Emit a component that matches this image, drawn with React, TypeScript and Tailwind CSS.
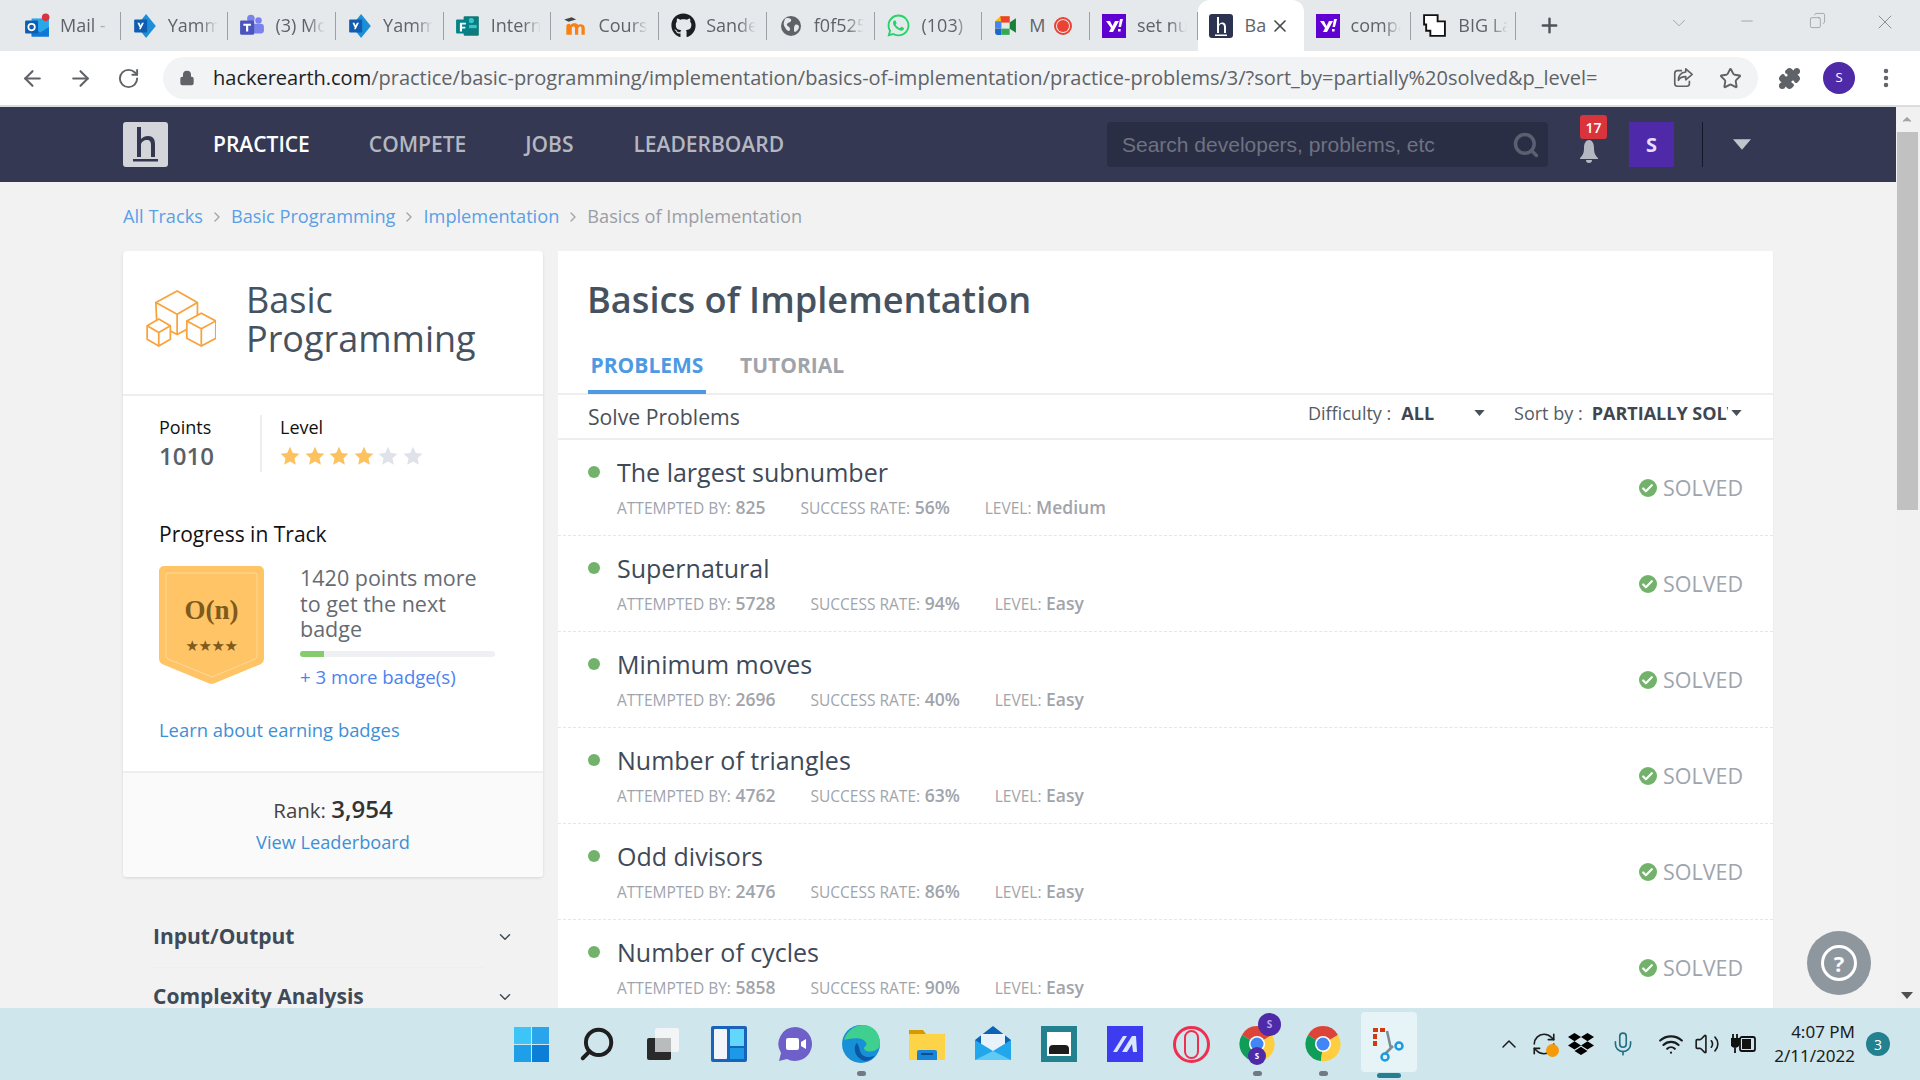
import React from 'react';
import { ArrowLeft, ArrowRight, ChevronDown, ChevronRight, ChevronUp, Copy, Lock, Minus, MoreVertical, Plus, Puzzle, RotateCw, Search, Star, Volume2, Wifi, X, Mic, RefreshCw, Check } from 'lucide-react';
import { FaDropbox, FaGithub, FaWhatsapp } from 'react-icons/fa';

const HLogo = ({ className }: { className: string }) => (
  <svg viewBox="0 0 45 45" className={className}>
    <rect width="45" height="45" rx="3" fill="currentColor" />
    <path d="M14 5h4v12c2-2 4-3 7-3 5 0 7 3 7 8v13h-4V23c0-3-1-5-4-5s-6 2-6 5v12h-4zM10 37h25v2.500H10z" fill="#33374f" />
  </svg>
);

const YahooIcon = () => (
  <svg viewBox="0 0 24 24" className="w-[24px] h-[24px]">
    <rect width="24" height="24" fill="#5f01d1" />
    <path d="M4 7h4l2.500 5L13 7h4l-6 11H7l2-4zM18 5h3l-2 8h-2.500zM16 15h2.600v2.600H16z" fill="#fff" />
  </svg>
);

const YammerIcon = () => (
  <svg viewBox="0 0 24 24" className="w-[26px] h-[26px]">
    <path d="M13 1l9 11-9 11-4-5V6z" fill="#1d8fd8" />
    <rect x="2" y="6" width="12" height="12" rx="1" fill="#0f5cb0" />
    <path d="M5 9h1.800L8 11.500 9.200 9H11l-3 6H6.500l.7-1.500z" fill="#fff" />
  </svg>
);

const tabs: { label: string; icon: React.ReactNode }[] = [
  {
    label: 'Mail -',
    icon: (
      <svg viewBox="0 0 24 24" className="w-[26px] h-[26px]">
        <rect x="7" y="5" width="16" height="16" fill="#28a8ea" />
        <path d="M7 13l8 5 8-5v9H7z" fill="#0f78d4" />
        <rect x="1" y="7" width="12" height="12" rx="1" fill="#0f5cb0" />
        <circle cx="7" cy="13" r="3" fill="none" stroke="#fff" strokeWidth="1.600" />
        <circle cx="20" cy="4" r="3.500" fill="#d9333f" />
      </svg>
    ),
  },
  { label: 'Yammer', icon: <YammerIcon /> },
  {
    label: '(3) Mo',
    icon: (
      <svg viewBox="0 0 24 24" className="w-[26px] h-[26px]">
        <circle cx="18" cy="7" r="3" fill="#7b83eb" />
        <circle cx="11" cy="5" r="3.500" fill="#7b83eb" />
        <rect x="11" y="10" width="12" height="9" rx="3" fill="#7b83eb" />
        <rect x="1" y="7" width="13" height="13" rx="1" fill="#4b53bc" />
        <path d="M4 10h7v1.800H8.500V17h-2v-5.200H4z" fill="#fff" />
      </svg>
    ),
  },
  { label: 'Yammer', icon: <YammerIcon /> },
  {
    label: 'Interns',
    icon: (
      <svg viewBox="0 0 24 24" className="w-[26px] h-[26px]">
        <rect x="8" y="3" width="14" height="18" rx="1" fill="#0f7b7b" />
        <circle cx="15" cy="7" r="2.500" fill="#37c6d0" />
        <rect x="11" y="11" width="9" height="3" fill="#37c6d0" />
        <rect x="1" y="6" width="12" height="13" rx="1" fill="#038387" />
        <path d="M4.500 9H10v1.600H6.500v2h3v1.600h-3V17h-2z" fill="#fff" />
      </svg>
    ),
  },
  {
    label: 'Course',
    icon: (
      <svg viewBox="0 0 24 24" className="w-[26px] h-[26px]">
        <path d="M2 6l7-2 4 2-7 2z" fill="#444" />
        <path d="M4 20V12c0-2 3-3 4-1 1-2 6-2 7 0 1-1 6-1 6 3v6h-3v-6c0-2-2-2-3 0v6h-3v-6c0-2-3-2-3 0v6z" fill="#f98012" />
      </svg>
    ),
  },
  { label: 'Sande', icon: <FaGithub className="w-[25px] h-[25px] text-[#1b1f23]" /> },
  {
    label: 'f0f525',
    icon: (
      <svg viewBox="0 0 24 24" className="w-[24px] h-[24px]">
        <circle cx="12" cy="12" r="10" fill="#5f6368" />
        <path d="M8 4c3 0 5 1 4 3s-3 1-4 3 3 2 3 5-3 2-4 0-3-4-2-7 1-4 3-4zM16 11c2-1 4 0 4 2s-3 5-4 5-1-2-1-3 0-3 1-4z" fill="#e6e9ec" />
      </svg>
    ),
  },
  { label: '(103)', icon: <FaWhatsapp className="w-[25px] h-[25px] text-[#25d366]" /> },
];

const tabsRight: { label: string; icon: React.ReactNode }[] = [
  {
    label: 'M',
    icon: (
      <svg viewBox="0 0 24 24" className="w-[25px] h-[25px]">
        <path d="M2 8l5-5h9v6H8v6H2z" fill="#fbbc04" />
        <path d="M2 15h6v6H4a2 2 0 0 1-2-2z" fill="#1967d2" />
        <path d="M8 15h8v6H8z" fill="#34a853" />
        <path d="M16 9l6-4v14l-6-4z" fill="#188038" />
        <path d="M2 8h6v7H2z" fill="#4285f4" />
        <path d="M7 3h9v6H8z" fill="#ea4335" />
      </svg>
    ),
  },
  { label: 'set nu', icon: <YahooIcon /> },
];

const problems = [
  { name: 'The largest subnumber', attempted: '825', rate: '56%', level: 'Medium' },
  { name: 'Supernatural', attempted: '5728', rate: '94%', level: 'Easy' },
  { name: 'Minimum moves', attempted: '2696', rate: '40%', level: 'Easy' },
  { name: 'Number of triangles', attempted: '4762', rate: '63%', level: 'Easy' },
  { name: 'Odd divisors', attempted: '2476', rate: '86%', level: 'Easy' },
  { name: 'Number of cycles', attempted: '5858', rate: '90%', level: 'Easy' },
];

function Tab({ label, icon }: { label: string; icon: React.ReactNode }) {
  return (
    <div className="w-[107.700px] h-[28px] flex items-center border-r border-[#9aa0a6] shrink-0">
      <div className="w-[47px] flex justify-center pl-[1px] shrink-0">{icon}</div>
      <span className="w-[50px] overflow-hidden whitespace-nowrap text-[18px] text-[#5f6368] [mask-image:linear-gradient(to_right,black_65%,transparent)]">
        {label}
      </span>
    </div>
  );
}

function Caret({ className }: { className: string }) {
  return (
    <svg viewBox="0 0 12 7" className={className}>
      <path d="M0 0h12L6 7z" fill="currentColor" />
    </svg>
  );
}

function Rating({ filled }: { filled: boolean }) {
  return (
    <svg viewBox="0 0 24 24" className={`w-[20px] h-[20px] ${filled ? 'text-[#fdc15e]' : 'text-[#dfe2e9]'}`}>
      <path d="M12 1l3.400 7.300 7.900.9-5.900 5.400 1.600 7.900L12 18.500l-7 4 1.600-7.900L.7 9.200l7.900-.9z" fill="currentColor" />
    </svg>
  );
}

function Blocks() {
  return (
    <svg viewBox="0 0 72 60" className="w-[70px] h-[58px] -mt-[8px] text-[#f9a23b]" fill="none" stroke="currentColor" strokeWidth="1.800" strokeLinejoin="round">
      <path d="M10 13L32 1l21 12v22l-21 11-21-11z" />
      <path d="M10 13l22 12 21-12M32 25v21" />
      <g fill="#fff">
        <path d="M1 37l12-7 12 7v14l-12 7-12-7z" />
        <path d="M42 32l15-8 15 8v18l-15 8-15-8z" />
      </g>
      <path d="M1 37l12 7 12-7M13 44v14M42 32l15 8 15-8M57 40v18" />
    </svg>
  );
}

function Badge() {
  return (
    <div className="relative w-[105px] h-[118px]">
      <svg viewBox="0 0 105 118" className="absolute inset-0 w-full h-full">
        <path d="M5 0h95a5 5 0 0 1 5 5v88a6 6 0 0 1-3 5l-46 19a8 8 0 0 1-7 0L3 98a6 6 0 0 1-3-5V5a5 5 0 0 1 5-5z" fill="#fec465" />
        <path d="M9 7h87a2 2 0 0 1 2 2v81a4 4 0 0 1-2 3l-43 18-44-18a4 4 0 0 1-2-3V9a2 2 0 0 1 2-2z" fill="none" stroke="#ffd99a" strokeWidth="1" />
      </svg>
      <div className="relative flex flex-col items-center pt-[29px] text-[#80591c]">
        <span className="font-['Liberation_Serif',serif] font-bold text-[27px] leading-[30px]">O(n)</span>
        <span className="text-[15px] leading-[16px] mt-[13px] tracking-[-0.500px] font-['DejaVu_Sans',sans-serif]">★★★★</span>
      </div>
    </div>
  );
}

function ProblemRow({ name, attempted, rate, level }: (typeof problems)[number]) {
  return (
    <div className="h-[96px] shrink-0 flex justify-between items-start pl-[30px] pr-[30px] pt-[17px] border-b border-dashed border-[#e6e6e6]">
      <div>
        <div className="flex items-center gap-[17px]">
          <span className="w-[12px] h-[12px] rounded-full bg-[#72b26a]" />
          <span className="text-[25px] leading-[30px] font-medium text-[#3f4a58]">{name}</span>
        </div>
        <div className="flex gap-[35px] ml-[29px] mt-[9px] text-[#a0a4ab] font-semibold text-[17.500px] leading-[22px]">
          <span><span className="text-[15.500px] font-normal">ATTEMPTED BY:</span> {attempted}</span>
          <span><span className="text-[15.500px] font-normal">SUCCESS RATE:</span> {rate}</span>
          <span><span className="text-[15.500px] font-normal">LEVEL:</span> {level}</span>
        </div>
      </div>
      <div className="flex items-center gap-[6px] mt-[17px] text-[#a0a4ab] text-[21.500px] leading-[28px]">
        <span className="w-[18px] h-[18px] rounded-full bg-[#72b26a] flex items-center justify-center">
          <Check className="w-[13px] h-[13px] text-white" strokeWidth={4} />
        </span>
        SOLVED
      </div>
    </div>
  );
}

function TaskIcon({ children, dot }: { children: React.ReactNode; dot?: boolean }) {
  return (
    <div className="relative w-[66px] h-[72px] flex items-center justify-center">
      {children}
      {dot && <span className="absolute bottom-[4px] left-[29px] w-[9px] h-[5px] rounded-full bg-[#6f7b80]" />}
    </div>
  );
}

function Chrome() {
  return (
    <svg viewBox="0 0 36 36" className="w-[36px] h-[36px]">
      <path d="M18 18L3 9a17 17 0 0 1 30 0z" fill="#db4437" />
      <path d="M18 18l-15-9a17 17 0 0 0 13 26z" fill="#0f9d58" />
      <path d="M18 18l15-9a17 17 0 0 1-17 26z" fill="#ffcd40" />
      <circle cx="18" cy="18" r="8" fill="#fff" />
      <circle cx="18" cy="18" r="6.500" fill="#4285f4" />
    </svg>
  );
}

function Crumb() {
  return <ChevronRight className="mx-[6px] w-[16px] h-[16px] text-[#a0a4ab]" strokeWidth={2} />;
}

export default function App() {
  return (
    <div className="w-[1920px] h-[1080px] overflow-hidden flex flex-col bg-[#f2f2f2] font-['Open_Sans',sans-serif]">
      {/* browser tabs */}
      <div className="h-[51px] shrink-0 bg-[#e6e9ec] flex items-center pl-[13px] relative">
        {tabs.map((t, i) => (
          <Tab key={i} label={t.label} icon={t.icon} />
        ))}
        <div className="w-[107.700px] h-[28px] flex items-center border-r border-[#9aa0a6] shrink-0 relative">
          <div className="w-[47px] flex justify-center shrink-0">{tabsRight[0].icon}</div>
          <span className="text-[18px] text-[#5f6368]">{tabsRight[0].label}</span>
          <span className="absolute left-[72px] top-[5px] w-[18px] h-[18px] rounded-full border-2 border-[#ea4335] flex items-center justify-center">
            <span className="w-[12px] h-[12px] rounded-full bg-[#ea4335]" />
          </span>
        </div>
        <Tab label={tabsRight[1].label} icon={tabsRight[1].icon} />
        <div className="w-[106px] h-[51px] bg-white rounded-t-[12px] flex items-center shrink-0 relative">
          <div className="w-[47px] flex justify-center shrink-0">
            <div className="w-[24px] h-[24px] text-[#2b3350]">
              <svg viewBox="0 0 24 24" className="w-[24px] h-[24px]">
                <rect width="24" height="24" rx="3" fill="#2b3350" />
                <path d="M8 3h2v7c1-1 2-1.500 3-1.500 3 0 4 2 4 4.500v6h-2v-6c0-2-1-3-2.500-3S10 11 10 13v6H8zM6 20.500h12V22H6z" fill="#fff" />
              </svg>
            </div>
          </div>
          <span className="text-[18px] text-[#5f6368]">Ba</span>
          <X className="absolute left-[72px] top-[16px] w-[20px] h-[20px] text-[#45494d]" strokeWidth={2} />
        </div>
        <Tab label="compa" icon={<YahooIcon />} />
        <div className="w-[105px] h-[28px] flex items-center border-r border-[#9aa0a6] shrink-0">
          <div className="w-[47px] flex justify-center shrink-0">
            <svg viewBox="0 0 24 24" className="w-[25px] h-[25px]" fill="#fff" stroke="#111" strokeWidth="1.800">
              <path d="M2 2h13v6h7v14H8v-5H4v-6H2z" />
            </svg>
          </div>
          <span className="w-[50px] overflow-hidden whitespace-nowrap text-[18px] text-[#5f6368] [mask-image:linear-gradient(to_right,black_65%,transparent)]">
            BIG Lar
          </span>
        </div>
        <Plus className="ml-[22px] w-[23px] h-[23px] text-[#4f5357]" strokeWidth={2.500} />
        <ChevronDown className="absolute left-[1668px] top-[12px] w-[22px] h-[22px] text-[#9aa0a6]" strokeWidth={1} />
        <Minus className="absolute left-[1738px] top-[12px] w-[18px] h-[18px] text-[#8b8f94]" strokeWidth={1} />
        <Copy className="absolute left-[1809px] top-[12px] w-[17px] h-[17px] text-[#8b8f94] -scale-x-100" strokeWidth={1} />
        <X className="absolute left-[1873px] top-[10px] w-[24px] h-[24px] text-[#8b8f94]" strokeWidth={1} />
      </div>

      {/* address bar */}
      <div className="h-[54px] shrink-0 bg-white flex items-center">
        <ArrowLeft className="ml-[20px] w-[25px] h-[25px] text-[#5f6368]" strokeWidth={2} />
        <ArrowRight className="ml-[23px] w-[25px] h-[25px] text-[#5f6368]" strokeWidth={2} />
        <RotateCw className="ml-[24px] w-[23px] h-[23px] text-[#5f6368]" strokeWidth={2} />
        <div className="ml-[23px] w-[1595px] h-[42px] rounded-full bg-[#f1f3f4] flex items-center pl-[16px] pr-[16px]">
          <Lock className="w-[16px] h-[16px] text-[#5f6368] fill-[#5f6368] shrink-0" />
          <span className="ml-[18px] text-[20px] text-[#5f6368] whitespace-nowrap">
            <span className="text-[#202124]">hackerearth.com</span>/practice/basic-programming/implementation/basics-of-implementation/practice-problems/3/?sort_by=partially%20solved&amp;p_level=
          </span>
          <div className="ml-auto flex items-center gap-[25px]">
            <svg viewBox="0 0 24 24" className="w-[22px] h-[22px] text-[#5f6368]" fill="none" stroke="currentColor" strokeWidth="1.800" strokeLinejoin="round">
              <path d="M11 4H6a3 3 0 0 0-3 3v11a3 3 0 0 0 3 3h10a3 3 0 0 0 3-3v-3" />
              <path d="M15 2l7 6-7 6v-3.500c-4 0-6.500 1-8 4 0-5 3-8.500 8-9z" />
            </svg>
            <Star className="w-[23px] h-[23px] text-[#5f6368]" strokeWidth={2} />
          </div>
        </div>
        <Puzzle className="ml-[20px] w-[23px] h-[23px] text-[#5f6368] fill-[#5f6368]" />
        <div className="ml-[22px] w-[32px] h-[32px] rounded-full bg-[#4f2aa8] text-white text-[13px] flex items-center justify-center">S</div>
        <MoreVertical className="ml-[19px] w-[24px] h-[24px] text-[#5f6368]" strokeWidth={2.500} />
      </div>
      <div className="h-[2px] shrink-0 bg-[#dadce0]" />

      <div className="flex-1 min-h-0 flex relative">
        <div className="w-[1896px] min-w-0 flex flex-col overflow-hidden">
          {/* site nav */}
          <nav className="h-[75px] shrink-0 bg-[#343853] flex items-center pl-[123px]">
            <HLogo className="w-[45px] h-[45px] text-[#d3d5da]" />
            <a className="ml-[45px] text-[21px] font-semibold text-white">PRACTICE</a>
            <a className="ml-[59px] text-[21px] font-semibold text-[#b5b7c0]">COMPETE</a>
            <a className="ml-[59px] text-[21px] font-semibold text-[#b5b7c0]">JOBS</a>
            <a className="ml-[60px] text-[21px] font-semibold text-[#b5b7c0]">LEADERBOARD</a>
            <div className="ml-auto w-[441px] h-[45px] rounded-[4px] bg-[#2a2e45] flex items-center pl-[15px] pr-[8px] font-['Liberation_Sans',sans-serif] text-[21px] text-[#6e7280]">
              Search developers, problems, etc
              <Search className="ml-auto w-[28px] h-[28px] text-[#5b6070]" strokeWidth={3} />
            </div>
            <div className="relative ml-[27px] w-[28px] h-[45px] flex justify-center items-end">
              <svg viewBox="0 0 20 24" className="w-[20px] h-[24px] mb-[3px] text-[#b4b8c2]">
                <path d="M10 0c3 0 5 3 5 8 0 5 1 7 4 10v1H1v-1c3-3 4-5 4-10 0-5 2-8 5-8zM7 20h6a3 3 0 0 1-6 0z" fill="currentColor" />
              </svg>
              <span className="absolute left-[5px] -top-[7px] w-[27px] h-[24px] rounded-[3px] bg-[#d9343c] text-white text-[14px] font-semibold flex items-center justify-center">17</span>
            </div>
            <div className="ml-[26px] w-[45px] h-[45px] bg-[#4f2aa8] text-[#e6dcff] text-[20px] font-bold flex items-center justify-center">S</div>
            <div className="ml-[28px] w-px h-[45px] bg-[#15182a]" />
            <Caret className="ml-[30px] w-[18px] h-[11px] text-[#c2c5cc]" />
            <div className="w-[145px]" />
          </nav>

          <div className="flex items-center h-[69px] shrink-0 pl-[123px] pt-[1px] text-[18.200px] text-[#5b9fe6]">
            <span>All Tracks</span>
            <Crumb />
            <span>Basic Programming</span>
            <Crumb />
            <span>Implementation</span>
            <Crumb />
            <span className="text-[#9a9ea5]">Basics of Implementation</span>
          </div>

          <div className="flex gap-[15px] pl-[123px] flex-1 min-h-0 overflow-hidden">
            {/* left column */}
            <div className="w-[420px] shrink-0">
              <div className="bg-white rounded-[4px] shadow-[0_1px_3px_rgba(0,0,0,0.12)]">
                <div className="h-[145px] flex items-center pl-[23px] border-b-2 border-[#eeeeee]">
                  <Blocks />
                  <h2 className="ml-[30px] text-[36px] leading-[39px] text-[#47525f] -mt-[8px]">Basic<br />Programming</h2>
                </div>
                <div className="pl-[36px] pt-[19px]">
                  <div className="flex">
                    <div className="w-[101px]">
                      <div className="text-[18px] leading-[25px] text-[#111]">Points</div>
                      <div className="text-[24px] leading-[32px] font-semibold text-[#5a6069]">1010</div>
                    </div>
                    <div className="border-l-2 border-[#eeeeee] pl-[18px] h-[57px]">
                      <div className="text-[18px] leading-[25px] text-[#111]">Level</div>
                      <div className="flex gap-[4.500px] mt-[6px]">
                        <Rating filled /><Rating filled /><Rating filled /><Rating filled /><Rating filled={false} /><Rating filled={false} />
                      </div>
                    </div>
                  </div>
                  <div className="mt-[47px] text-[21px] leading-[30px] text-[#111]">Progress in Track</div>
                  <div className="flex mt-[17px] gap-[36px]">
                    <Badge />
                    <div className="w-[196px]">
                      <p className="text-[21.500px] leading-[25.500px] text-[#666b73] -mt-[1px]">1420 points more to get the next badge</p>
                      <div className="w-[195px] h-[6px] mt-[9px] rounded-full bg-[#eff0f4] overflow-hidden">
                        <div className="w-[24px] h-full bg-[#86cc6d]" />
                      </div>
                      <div className="mt-[7px] text-[18.600px] leading-[26px] text-[#4d82f0] whitespace-nowrap">+ 3 more badge(s)</div>
                    </div>
                  </div>
                  <div className="mt-[27px] pb-[28px] text-[18.400px] leading-[26px] text-[#3d8fd6]">Learn about earning badges</div>
                </div>
                <div className="h-[106px] border-t-2 border-[#eeeeee] bg-[#fafafa] flex flex-col items-center pt-[20px] rounded-b-[4px]">
                  <div className="text-[20.500px] leading-[32px] text-[#444]">Rank: <span className="text-[24px] font-semibold text-[#333]">3,954</span></div>
                  <div className="text-[18.200px] leading-[26px] mt-[3px] text-[#3d8fd6]">View Leaderboard</div>
                </div>
              </div>
              <div className="flex items-center justify-between mt-[41px] pl-[30px] pr-[29px] h-[38px] text-[21px] font-bold text-[#3f4a58]">
                Input/Output
                <ChevronDown className="w-[18px] h-[18px]" strokeWidth={2} />
              </div>
              <div className="ml-[30px] w-[330px] mt-[11px] border-b border-[#eeeeee]" />
              <div className="flex items-center justify-between mt-[10px] pl-[30px] pr-[29px] h-[38px] text-[21px] font-bold text-[#3f4a58]">
                Complexity Analysis
                <ChevronDown className="w-[18px] h-[18px]" strokeWidth={2} />
              </div>
            </div>

            {/* problems */}
            <div className="w-[1216px] shrink-0 bg-white border-r border-[#eeeeee] flex flex-col">
              <h1 className="pl-[29px] pt-[23px] text-[36.200px] leading-[50px] font-semibold text-[#47525f]">Basics of Implementation</h1>
              <div className="h-[50px] mt-[21px] border-b-2 border-[#eeeeee] flex pl-[30px] shrink-0 text-[21px] font-bold leading-[30px]">
                <div className="w-[118px] h-[49px] text-center border-b-4 border-[#4e9ae2] text-[#4e9ae2] pt-[5px]">PROBLEMS</div>
                <div className="ml-[34px] pt-[5px] text-[#9fa3aa]">TUTORIAL</div>
              </div>
              <div className="h-[45px] shrink-0 border-b-2 border-[#eeeeee] flex items-center pl-[30px] relative text-[#555b64]">
                <span className="text-[21.200px] text-[#4a5058]">Solve Problems</span>
                <div className="absolute left-[750px] top-[5px] flex items-center text-[18px] leading-[26px] whitespace-nowrap">
                  Difficulty :<span className="ml-[10px] font-bold text-[#3f4650]">ALL</span>
                  <Caret className="ml-[40px] w-[11px] h-[6px] text-[#4a5058]" />
                  <span className="ml-[29px]">Sort by :</span>
                  <span className="ml-[9px] w-[136px] overflow-hidden font-bold text-[#3f4650]">PARTIALLY SOLVED</span>
                  <Caret className="ml-[3px] w-[11px] h-[6px] text-[#4a5058]" />
                </div>
              </div>
              {problems.map((p) => (
                <ProblemRow key={p.name} {...p} />
              ))}
            </div>
          </div>
        </div>

        {/* page scrollbar */}
        <div className="w-[24px] bg-[#f1f1f1] flex flex-col items-center shrink-0 pr-[2px]">
          <ChevronUp className="w-[14px] h-[25px] text-[#a3a3a3] fill-[#a3a3a3]" />
          <div className="w-[21px] h-[378px] bg-[#c1c1c1]" />
          <div className="flex-1" />
          <Caret className="w-[12px] h-[7px] mb-[9px] text-[#505050]" />
        </div>

        <div className="absolute left-[1807px] top-[824px] w-[64px] h-[64px] rounded-full bg-[#8f979e] flex items-center justify-center">
          <div className="w-[36px] h-[36px] rounded-full border-[3px] border-white text-white text-[22px] font-bold flex items-center justify-center">?</div>
        </div>
      </div>

      {/* windows taskbar */}
      <div className="h-[72px] shrink-0 bg-[#cfe6ec] flex items-center pl-[498px] relative">
        <TaskIcon>
          <svg viewBox="0 0 34 34" className="w-[35px] h-[35px]">
            <rect width="16.500" height="16.500" fill="#3ec5f7" />
            <rect x="17.500" width="16.500" height="16.500" fill="#2aa5ec" />
            <rect y="17.500" width="16.500" height="16.500" fill="#1e9fe8" />
            <rect x="17.500" y="17.500" width="16.500" height="16.500" fill="#0b7fd8" />
          </svg>
        </TaskIcon>
        <TaskIcon><Search className="w-[38px] h-[38px] text-[#1f1f1f] -scale-x-100" strokeWidth={2.500} /></TaskIcon>
        <TaskIcon>
          <svg viewBox="0 0 36 36" className="w-[36px] h-[36px]">
            <rect x="10" y="2" width="24" height="24" rx="2" fill="#f1f5f6" />
            <rect x="2" y="12" width="24" height="22" rx="2" fill="#2a2a2a" />
            <rect x="10" y="12" width="16" height="14" fill="#b8bcbd" />
          </svg>
        </TaskIcon>
        <TaskIcon>
          <svg viewBox="0 0 36 36" className="w-[36px] h-[36px]">
            <rect width="36" height="36" rx="2" fill="#1a63b8" />
            <rect x="3" y="3" width="13" height="30" rx="1" fill="#f2f6fa" />
            <rect x="19" y="3" width="14" height="17" fill="#62d6fb" />
            <rect x="19" y="22" width="14" height="11" fill="#1b9ae8" />
          </svg>
        </TaskIcon>
        <TaskIcon>
          <svg viewBox="0 0 36 36" className="w-[36px] h-[36px]">
            <path d="M18 1a17 17 0 1 1-8 32l-8 2 2-8A17 17 0 0 1 18 1z" fill="#6f5fc8" />
            <rect x="9" y="12" width="13" height="12" rx="2" fill="#fff" />
            <path d="M24 16l5-3v10l-5-3z" fill="#fff" />
          </svg>
        </TaskIcon>
        <TaskIcon dot>
          <svg viewBox="0 0 36 36" className="w-[38px] h-[38px]">
            <circle cx="18" cy="18" r="18" fill="#1890d8" />
            <path d="M2 14C5 4 14 0 20 0c9 0 16 7 16 17 0 6-5 8-10 8-3 0-6-2-5-4 3-1 3-5-1-7-7-3-15 0-18 0z" fill="#3fcf8e" />
            <path d="M14 17c-4 4-2 15 8 17 4 0 7-2 9-5-4 2-9 2-12-1-3-3-2-8-5-11z" fill="#0c57a4" />
          </svg>
        </TaskIcon>
        <TaskIcon>
          <svg viewBox="0 0 36 36" className="w-[36px] h-[36px]">
            <path d="M0 4h14l3 4h19v5H0z" fill="#d49a00" />
            <rect y="8" width="36" height="26" rx="1" fill="#fdd348" />
            <path d="M10 24h16a2 2 0 0 1 2 2v8H8v-8a2 2 0 0 1 2-2z" fill="#1a84d8" />
            <rect x="12" y="27" width="12" height="2" fill="#0c4f8f" />
          </svg>
        </TaskIcon>
        <TaskIcon>
          <svg viewBox="0 0 36 36" className="w-[36px] h-[36px]">
            <path d="M18 0l18 14v20H0V14z" fill="#0b63b8" />
            <path d="M6 8h24v12l-12 6-12-6z" fill="#e8f2fa" />
            <path d="M0 14l18 11 18-11v20H0z" fill="#22a7ec" />
            <path d="M0 34l18-9 18 9z" fill="#5fcbf5" />
          </svg>
        </TaskIcon>
        <TaskIcon>
          <div className="w-[36px] h-[36px] bg-[#23808f] flex items-center justify-center">
            <div className="w-[24px] h-[24px] bg-white flex flex-col justify-end p-[2px]">
              <div className="h-[9px] rounded-t-[4px] bg-[#1c1c1c]" />
            </div>
          </div>
        </TaskIcon>
        <TaskIcon>
          <svg viewBox="0 0 36 36" className="w-[36px] h-[36px]">
            <rect width="36" height="36" fill="#3d3cf0" />
            <path d="M6 26L16 10h4L10 26zM15 26L25 10h4l1 16h-4l-1-8-5 8z" fill="#d8e6ff" />
          </svg>
        </TaskIcon>
        <TaskIcon>
          <div className="w-[37px] h-[37px] rounded-full border-[3px] border-[#ef2f50] flex items-center justify-center">
            <div className="w-[15px] h-[29px] rounded-full border-2 border-[#ef2f50]" />
          </div>
        </TaskIcon>
        <TaskIcon dot>
          <Chrome />
          <span className="absolute left-[34px] top-[5px] w-[23px] h-[23px] rounded-full bg-[#4f2aa8] text-[#b9a5ea] text-[10px] font-bold flex items-center justify-center">S</span>
          <span className="absolute left-[24px] top-[39px] w-[18px] h-[18px] rounded-full bg-[#4f2aa8] text-white text-[8px] font-bold flex items-center justify-center">S</span>
        </TaskIcon>
        <TaskIcon dot><Chrome /></TaskIcon>
        <TaskIcon>
          <div className="absolute left-[5px] top-[4px] w-[56px] h-[60px] rounded-[4px] bg-[#e6f3f7]" />
          <svg viewBox="0 0 36 36" className="relative w-[36px] h-[36px]">
            <path d="M2 2h5v4H2zM9 2h5v4H9zM2 8h4v5H2zM2 15h4v5H2z" fill="#d4380d" />
            <path d="M16 5l4 18M22 20l-8 8" stroke="#7c8a94" strokeWidth="2.500" />
            <circle cx="28" cy="20" r="3.500" fill="none" stroke="#1a9be0" strokeWidth="2.500" />
            <circle cx="14" cy="31" r="3.500" fill="none" stroke="#1a9be0" strokeWidth="2.500" />
          </svg>
          <span className="absolute bottom-[2px] left-[21px] w-[24px] h-[5px] rounded-full bg-[#23808f]" />
        </TaskIcon>

        {/* system tray */}
        <div className="absolute left-[1497px] top-0 h-[72px] flex items-center text-[#1c1c1c]">
          <ChevronUp className="w-[24px] h-[24px]" strokeWidth={1.500} />
          <div className="relative ml-[10px] w-[26px] h-[26px]">
            <RefreshCw className="w-[26px] h-[26px]" strokeWidth={1.500} />
            <span className="absolute right-[-2px] bottom-0 w-[13px] h-[13px] rounded-full bg-[#f59a0c]" />
          </div>
          <FaDropbox className="ml-[11px] w-[26px] h-[26px] text-black" />
          <Mic className="ml-[16px] w-[26px] h-[28px] text-[#1f6f86]" strokeWidth={1.500} />
          <Wifi className="ml-[22px] w-[26px] h-[26px]" strokeWidth={2} />
          <Volume2 className="ml-[10px] w-[26px] h-[26px]" strokeWidth={1.500} />
          <svg viewBox="0 0 26 24" className="ml-[11px] w-[26px] h-[24px]">
            <path d="M2 2v5M6 2v5M0 7h8v4a4 4 0 0 1-8 0zM4 15v6" stroke="#111" strokeWidth="1.800" fill="#111" />
            <rect x="9" y="5" width="15" height="14" rx="2" fill="none" stroke="#111" strokeWidth="1.800" />
            <rect x="11" y="7" width="9" height="10" fill="#111" />
          </svg>
        </div>
        <div className="absolute right-[65px] top-[12px] text-right font-['Noto_Sans',sans-serif] text-[17px] leading-[24px] text-[#1c1c1c]">
          <div>4:07 PM</div>
          <div>2/11/2022</div>
        </div>
        <div className="absolute left-[1866px] top-[24px] w-[24px] h-[24px] rounded-full bg-[#23808f] text-white text-[14px] flex items-center justify-center">3</div>
      </div>
    </div>
  );
}
